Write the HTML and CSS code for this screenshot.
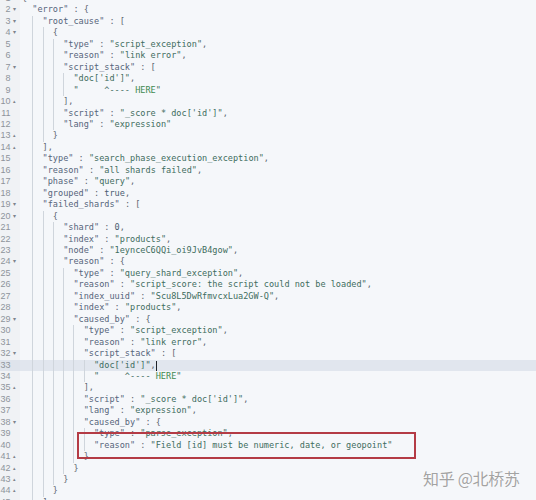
FILE: index.html
```html
<!DOCTYPE html>
<html>
<head>
<meta charset="utf-8">
<link rel="stylesheet" href="styles.css">
</head>
<body>
<div class="editor">
<div class="line"><span class="gut"><span class="num">1</span><span class="fold">▾</span></span><span class="code">{</span></div>
<div class="line"><span class="gut"><span class="num">2</span><span class="fold">▾</span></span><span class="code"><span class="ig"></span><span class="k">"error"</span> : {</span></div>
<div class="line"><span class="gut"><span class="num">3</span><span class="fold">▾</span></span><span class="code"><span class="ig"></span><span class="ig"></span><span class="k">"root_cause"</span> : [</span></div>
<div class="line"><span class="gut"><span class="num">4</span><span class="fold">▾</span></span><span class="code"><span class="ig"></span><span class="ig"></span><span class="ig"></span>{</span></div>
<div class="line"><span class="gut"><span class="num">5</span><span class="fold"></span></span><span class="code"><span class="ig"></span><span class="ig"></span><span class="ig"></span><span class="ig"></span><span class="k">"type"</span> : <span class="s">"script_exception"</span>,</span></div>
<div class="line"><span class="gut"><span class="num">6</span><span class="fold"></span></span><span class="code"><span class="ig"></span><span class="ig"></span><span class="ig"></span><span class="ig"></span><span class="k">"reason"</span> : <span class="s">"link error"</span>,</span></div>
<div class="line"><span class="gut"><span class="num">7</span><span class="fold">▾</span></span><span class="code"><span class="ig"></span><span class="ig"></span><span class="ig"></span><span class="ig"></span><span class="k">"script_stack"</span> : [</span></div>
<div class="line"><span class="gut"><span class="num">8</span><span class="fold"></span></span><span class="code"><span class="ig"></span><span class="ig"></span><span class="ig"></span><span class="ig"></span><span class="ig"></span><span class="s">"doc['id']"</span>,</span></div>
<div class="line"><span class="gut"><span class="num">9</span><span class="fold"></span></span><span class="code"><span class="ig"></span><span class="ig"></span><span class="ig"></span><span class="ig"></span><span class="ig"></span><span class="s">"     ^---- <span class="here">HERE</span>"</span></span></div>
<div class="line"><span class="gut"><span class="num">10</span><span class="fold up">▴</span></span><span class="code"><span class="ig"></span><span class="ig"></span><span class="ig"></span><span class="ig"></span>],</span></div>
<div class="line"><span class="gut"><span class="num">11</span><span class="fold"></span></span><span class="code"><span class="ig"></span><span class="ig"></span><span class="ig"></span><span class="ig"></span><span class="k">"script"</span> : <span class="s">"_score * doc['id']"</span>,</span></div>
<div class="line"><span class="gut"><span class="num">12</span><span class="fold"></span></span><span class="code"><span class="ig"></span><span class="ig"></span><span class="ig"></span><span class="ig"></span><span class="k">"lang"</span> : <span class="s">"expression"</span></span></div>
<div class="line"><span class="gut"><span class="num">13</span><span class="fold up">▴</span></span><span class="code"><span class="ig"></span><span class="ig"></span><span class="ig"></span>}</span></div>
<div class="line"><span class="gut"><span class="num">14</span><span class="fold up">▴</span></span><span class="code"><span class="ig"></span><span class="ig"></span>],</span></div>
<div class="line"><span class="gut"><span class="num">15</span><span class="fold"></span></span><span class="code"><span class="ig"></span><span class="ig"></span><span class="k">"type"</span> : <span class="s">"search_phase_execution_exception"</span>,</span></div>
<div class="line"><span class="gut"><span class="num">16</span><span class="fold"></span></span><span class="code"><span class="ig"></span><span class="ig"></span><span class="k">"reason"</span> : <span class="s">"all shards failed"</span>,</span></div>
<div class="line"><span class="gut"><span class="num">17</span><span class="fold"></span></span><span class="code"><span class="ig"></span><span class="ig"></span><span class="k">"phase"</span> : <span class="s">"query"</span>,</span></div>
<div class="line"><span class="gut"><span class="num">18</span><span class="fold"></span></span><span class="code"><span class="ig"></span><span class="ig"></span><span class="k">"grouped"</span> : <span class="c">true</span>,</span></div>
<div class="line"><span class="gut"><span class="num">19</span><span class="fold">▾</span></span><span class="code"><span class="ig"></span><span class="ig"></span><span class="k">"failed_shards"</span> : [</span></div>
<div class="line"><span class="gut"><span class="num">20</span><span class="fold">▾</span></span><span class="code"><span class="ig"></span><span class="ig"></span><span class="ig"></span>{</span></div>
<div class="line"><span class="gut"><span class="num">21</span><span class="fold"></span></span><span class="code"><span class="ig"></span><span class="ig"></span><span class="ig"></span><span class="ig"></span><span class="k">"shard"</span> : <span class="c">0</span>,</span></div>
<div class="line"><span class="gut"><span class="num">22</span><span class="fold"></span></span><span class="code"><span class="ig"></span><span class="ig"></span><span class="ig"></span><span class="ig"></span><span class="k">"index"</span> : <span class="s">"products"</span>,</span></div>
<div class="line"><span class="gut"><span class="num">23</span><span class="fold"></span></span><span class="code"><span class="ig"></span><span class="ig"></span><span class="ig"></span><span class="ig"></span><span class="k">"node"</span> : <span class="s">"1eynceC6QQi_oi9JvB4gow"</span>,</span></div>
<div class="line"><span class="gut"><span class="num">24</span><span class="fold">▾</span></span><span class="code"><span class="ig"></span><span class="ig"></span><span class="ig"></span><span class="ig"></span><span class="k">"reason"</span> : {</span></div>
<div class="line"><span class="gut"><span class="num">25</span><span class="fold"></span></span><span class="code"><span class="ig"></span><span class="ig"></span><span class="ig"></span><span class="ig"></span><span class="ig"></span><span class="k">"type"</span> : <span class="s">"query_shard_exception"</span>,</span></div>
<div class="line"><span class="gut"><span class="num">26</span><span class="fold"></span></span><span class="code"><span class="ig"></span><span class="ig"></span><span class="ig"></span><span class="ig"></span><span class="ig"></span><span class="k">"reason"</span> : <span class="s">"script_score: the script could not be loaded"</span>,</span></div>
<div class="line"><span class="gut"><span class="num">27</span><span class="fold"></span></span><span class="code"><span class="ig"></span><span class="ig"></span><span class="ig"></span><span class="ig"></span><span class="ig"></span><span class="k">"index_uuid"</span> : <span class="s">"Scu8L5DwRfmvcxLua2GW-Q"</span>,</span></div>
<div class="line"><span class="gut"><span class="num">28</span><span class="fold"></span></span><span class="code"><span class="ig"></span><span class="ig"></span><span class="ig"></span><span class="ig"></span><span class="ig"></span><span class="k">"index"</span> : <span class="s">"products"</span>,</span></div>
<div class="line"><span class="gut"><span class="num">29</span><span class="fold">▾</span></span><span class="code"><span class="ig"></span><span class="ig"></span><span class="ig"></span><span class="ig"></span><span class="ig"></span><span class="k">"caused_by"</span> : {</span></div>
<div class="line"><span class="gut"><span class="num">30</span><span class="fold"></span></span><span class="code"><span class="ig"></span><span class="ig"></span><span class="ig"></span><span class="ig"></span><span class="ig"></span><span class="ig"></span><span class="k">"type"</span> : <span class="s">"script_exception"</span>,</span></div>
<div class="line"><span class="gut"><span class="num">31</span><span class="fold"></span></span><span class="code"><span class="ig"></span><span class="ig"></span><span class="ig"></span><span class="ig"></span><span class="ig"></span><span class="ig"></span><span class="k">"reason"</span> : <span class="s">"link error"</span>,</span></div>
<div class="line"><span class="gut"><span class="num">32</span><span class="fold">▾</span></span><span class="code"><span class="ig"></span><span class="ig"></span><span class="ig"></span><span class="ig"></span><span class="ig"></span><span class="ig"></span><span class="k">"script_stack"</span> : [</span></div>
<div class="line active"><span class="gut"><span class="num">33</span><span class="fold"></span></span><span class="code"><span class="ig"></span><span class="ig"></span><span class="ig"></span><span class="ig"></span><span class="ig"></span><span class="ig"></span><span class="ig"></span><span class="s">"doc['id']"</span>,<span class="cursor"></span></span></div>
<div class="line"><span class="gut"><span class="num">34</span><span class="fold"></span></span><span class="code"><span class="ig"></span><span class="ig"></span><span class="ig"></span><span class="ig"></span><span class="ig"></span><span class="ig"></span><span class="ig"></span><span class="s">"     ^---- <span class="here">HERE</span>"</span></span></div>
<div class="line"><span class="gut"><span class="num">35</span><span class="fold up">▴</span></span><span class="code"><span class="ig"></span><span class="ig"></span><span class="ig"></span><span class="ig"></span><span class="ig"></span><span class="ig"></span>],</span></div>
<div class="line"><span class="gut"><span class="num">36</span><span class="fold"></span></span><span class="code"><span class="ig"></span><span class="ig"></span><span class="ig"></span><span class="ig"></span><span class="ig"></span><span class="ig"></span><span class="k">"script"</span> : <span class="s">"_score * doc['id']"</span>,</span></div>
<div class="line"><span class="gut"><span class="num">37</span><span class="fold"></span></span><span class="code"><span class="ig"></span><span class="ig"></span><span class="ig"></span><span class="ig"></span><span class="ig"></span><span class="ig"></span><span class="k">"lang"</span> : <span class="s">"expression"</span>,</span></div>
<div class="line"><span class="gut"><span class="num">38</span><span class="fold">▾</span></span><span class="code"><span class="ig"></span><span class="ig"></span><span class="ig"></span><span class="ig"></span><span class="ig"></span><span class="ig"></span><span class="k">"caused_by"</span> : {</span></div>
<div class="line"><span class="gut"><span class="num">39</span><span class="fold"></span></span><span class="code"><span class="ig"></span><span class="ig"></span><span class="ig"></span><span class="ig"></span><span class="ig"></span><span class="ig"></span><span class="ig"></span><span class="k">"type"</span> : <span class="s">"parse_exception"</span>,</span></div>
<div class="line"><span class="gut"><span class="num">40</span><span class="fold"></span></span><span class="code"><span class="ig"></span><span class="ig"></span><span class="ig"></span><span class="ig"></span><span class="ig"></span><span class="ig"></span><span class="ig"></span><span class="k">"reason"</span> : <span class="s">"Field [id] must be numeric, date, or geopoint"</span></span></div>
<div class="line"><span class="gut"><span class="num">41</span><span class="fold up">▴</span></span><span class="code"><span class="ig"></span><span class="ig"></span><span class="ig"></span><span class="ig"></span><span class="ig"></span><span class="ig"></span>}</span></div>
<div class="line"><span class="gut"><span class="num">42</span><span class="fold up">▴</span></span><span class="code"><span class="ig"></span><span class="ig"></span><span class="ig"></span><span class="ig"></span><span class="ig"></span>}</span></div>
<div class="line"><span class="gut"><span class="num">43</span><span class="fold up">▴</span></span><span class="code"><span class="ig"></span><span class="ig"></span><span class="ig"></span><span class="ig"></span>}</span></div>
<div class="line"><span class="gut"><span class="num">44</span><span class="fold up">▴</span></span><span class="code"><span class="ig"></span><span class="ig"></span><span class="ig"></span>}</span></div>
<div class="line"><span class="gut"><span class="num">45</span><span class="fold up">▴</span></span><span class="code"><span class="ig"></span><span class="ig"></span>]</span></div>
<div class="line"><span class="gut"><span class="num">46</span><span class="fold up">▴</span></span><span class="code"><span class="ig"></span>}</span></div>
</div>
<div class="mark"></div>
<div class="watermark">知乎 @北桥苏</div>
</body>
</html>
```

FILE: styles.css
```css
html, body {
  margin: 0;
  padding: 0;
  background: #f5f7fa;
  overflow: hidden;
  height: 500px;
}

.editor {
  margin-top: -7px;
  font-family: "DejaVu Sans Mono", monospace;
  font-size: 8.55px;
  line-height: 11.46px;
  color: #5d6670;
}

.line {
  display: flex;
  height: 11.46px;
  white-space: pre;
}

.line.active {
  background: #e1e6ee;
}

.gut {
  flex: none;
  width: 20px;
  display: flex;
  background: #f0f2f5;
  color: #8e949c;
  font-family: "Liberation Sans", Arial, sans-serif;
  font-size: 9px;
}

.line.active .gut {
  background: #dfe4ec;
}

.num {
  width: 10.5px;
  text-align: right;
}

.fold {
  width: 7px;
  text-align: center;
  font-size: 6px;
  color: #7d838c;
}

.fold.up {
  font-size: 5px;
}

.code {
  padding-left: 2px;
  display: flex;
  align-items: stretch;
}

.ig {
  display: inline-block;
  width: 2ch;
  height: 11.46px;
  box-sizing: border-box;
}

.ig + .ig {
  border-left: 1px solid #cfd5dc;
}

.k {
  color: #55657a;
}

.s {
  color: #3f6d5e;
}

.here {
  color: #3f8a50;
}

.c {
  color: #4c5d70;
}

.cursor {
  display: inline-block;
  width: 1.5px;
  height: 10px;
  margin-top: 1px;
  background: #1e2228;
}

.mark {
  position: absolute;
  left: 77px;
  top: 432px;
  width: 335px;
  height: 23px;
  border: 2px solid #b43b45;
}

.watermark {
  position: absolute;
  left: 423px;
  top: 466px;
  font-family: "Noto Sans CJK SC", "Noto Sans", sans-serif;
  font-size: 16px;
  color: #a3a3a3;
  letter-spacing: -0.3px;
  text-shadow: 0 0 1px #ffffff, 0 0 2px #ffffff;
}
```
